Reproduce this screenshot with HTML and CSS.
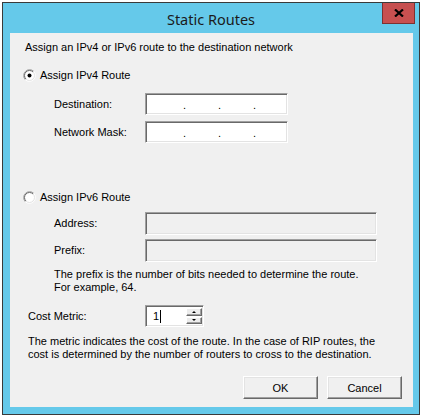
FILE: index.html
```html
<!DOCTYPE html>
<html>
<head>
<meta charset="utf-8">
<link rel="stylesheet" href="styles.css">
</head>
<body>
<div class="window">
  <div class="titlebar">
    <span class="spacer"></span>
    <span class="title">Static Routes</span>
    <span class="close-wrap">
      <span class="close">
        <svg width="10" height="8" viewBox="0 0 10 8"><path d="M1 0.5 L9 7.5 M9 0.5 L1 7.5" stroke="#000" stroke-width="2.2" fill="none"/></svg>
      </span>
    </span>
  </div>
  <div class="client">
    <div class="intro">Assign an IPv4 or IPv6 route to the destination network</div>

    <div class="radio-row r4">
      <svg class="radio" width="13" height="13" viewBox="0 0 13 13">
        <circle cx="6.5" cy="6.5" r="5.5" fill="#fff"/>
        <path d="M2.26 10.74 A6 6 0 0 1 10.74 2.26" stroke="#a0a0a0" fill="none"/>
        <path d="M10.74 2.26 A6 6 0 0 1 2.26 10.74" stroke="#fff" fill="none"/>
        <path d="M2.96 10.04 A5 5 0 0 1 10.04 2.96" stroke="#696969" fill="none"/>
        <path d="M10.04 2.96 A5 5 0 0 1 2.96 10.04" stroke="#e3e3e3" fill="none"/>
        <circle cx="6.5" cy="6.5" r="2" fill="#000"/>
      </svg>
      <span>Assign IPv4 Route</span>
    </div>
    <div class="field-row dest">
      <span class="label">Destination:</span>
      <div class="box ip"><span>.</span><span>.</span><span>.</span></div>
    </div>
    <div class="field-row mask">
      <span class="label">Network Mask:</span>
      <div class="box ip"><span>.</span><span>.</span><span>.</span></div>
    </div>

    <div class="radio-row r6">
      <svg class="radio" width="13" height="13" viewBox="0 0 13 13">
        <circle cx="6.5" cy="6.5" r="5.5" fill="#fff"/>
        <path d="M2.26 10.74 A6 6 0 0 1 10.74 2.26" stroke="#a0a0a0" fill="none"/>
        <path d="M10.74 2.26 A6 6 0 0 1 2.26 10.74" stroke="#fff" fill="none"/>
        <path d="M2.96 10.04 A5 5 0 0 1 10.04 2.96" stroke="#696969" fill="none"/>
        <path d="M10.04 2.96 A5 5 0 0 1 2.96 10.04" stroke="#e3e3e3" fill="none"/>
      </svg>
      <span>Assign IPv6 Route</span>
    </div>
    <div class="field-row addr">
      <span class="label">Address:</span>
      <div class="box wide disabled"></div>
    </div>
    <div class="field-row prefix">
      <span class="label">Prefix:</span>
      <div class="box wide disabled"></div>
    </div>
    <div class="note prefix-note">The prefix is the number of bits needed to determine the route.<br>For example, 64.</div>

    <div class="field-row cost">
      <span class="label">Cost Metric:</span>
      <div class="box spin">
        <span class="val">1</span><span class="caret"></span>
        <span class="spin-btns">
          <span class="sbtn"><span class="up"></span></span>
          <span class="sbtn"><span class="down"></span></span>
        </span>
      </div>
    </div>
    <div class="note metric-note">The metric indicates the cost of the route. In the case of RIP routes, the<br>cost is determined by the number of routers to cross to the destination.</div>

    <div class="buttons">
      <span class="btn">OK</span>
      <span class="btn">Cancel</span>
    </div>
  </div>
</div>
</body>
</html>
```
FILE: styles.css
```css
html, body {
  margin: 0;
  padding: 0;
  background: #ffffff;
}
body {
  width: 422px;
  height: 416px;
  overflow: hidden;
  font-family: "Liberation Sans", Arial, sans-serif;
  font-size: 11px;
  color: #000;
}
.window {
  margin: 2px 0 0 2px;
  width: 418px;
  height: 413px;
  box-sizing: border-box;
  border: 1px solid #3a3a3a;
  background: #65c9ea;
  display: flex;
  flex-direction: column;
}
.titlebar {
  height: 30px;
  display: grid;
  grid-template-columns: 1fr auto 1fr;
  align-items: start;
}
.title {
  font-family: "Noto Sans", "Open Sans", sans-serif;
  font-size: 14.5px;
  color: #1b1b1b;
  line-height: 30px;
  padding-top: 1px;
}
.close-wrap {
  display: flex;
  justify-content: flex-end;
  padding-right: 4px;
}
.close {
  width: 33px;
  height: 21px;
  box-sizing: border-box;
  background: #c75050;
  border: 1px solid #7d3131;
  border-top: none;
  display: flex;
  align-items: center;
  justify-content: center;
  padding-left: 1px;
}
.client {
  margin: 0 6px 7px 7px;
  height: 374px;
  background: #f0f0f0;
  display: flex;
  flex-direction: column;
  padding-left: 15px;
  padding-right: 11px;
  box-sizing: border-box;
  line-height: 13px;
}
.intro {
  margin-top: 8px;
  height: 13px;
}
.radio-row {
  display: flex;
  align-items: center;
  height: 13px;
  margin-left: -2px;
  gap: 4px;
}
.radio { flex: none; }
.r4 { margin-top: 15px; }
.r6 { margin-top: 48px; }
.field-row {
  display: flex;
  align-items: center;
  padding-left: 29px;
}
.field-row .label {
  width: 91px;
  flex: none;
}
.dest { margin-top: 11px; }
.mask { margin-top: 6px; }
.addr { margin-top: 8px; }
.prefix { margin-top: 4px; }
.box {
  height: 22px;
  box-sizing: border-box;
  background: #fff;
  border: 1px solid;
  border-color: #a0a0a0 #ffffff #ffffff #a0a0a0;
  box-shadow: inset 1px 1px 0 #696969, inset -1px -1px 0 #e3e3e3;
}
.ip {
  width: 143px;
  display: grid;
  grid-template-columns: 35px 35px 35px;
  padding-left: 37px;
  padding-top: 2px;
  align-items: center;
}
.wide {
  width: 232px;
  height: 23px;
}
.disabled { background: #f0f0f0; }
.prefix-note {
  margin-top: 6px;
  padding-left: 29px;
}
.note { line-height: 13px; }
.cost {
  margin-top: 11px;
  padding-left: 3px;
}
.cost .label { width: 117px; }
.spin {
  width: 59px;
  display: flex;
  align-items: center;
  padding: 2px 1px 2px 7px;
}
.val { line-height: 13px; }
.caret {
  width: 1px;
  height: 13px;
  background: #000;
  margin-left: 1px;
}
.spin-btns {
  margin-left: auto;
  display: flex;
  flex-direction: column;
  gap: 1px;
  align-self: stretch;
}
.sbtn {
  width: 16px;
  flex: 1;
  box-sizing: border-box;
  background: #ececec;
  border: 1px solid;
  border-color: #ffffff #696969 #696969 #ffffff;
  box-shadow: inset -1px -1px 0 #a0a0a0;
  display: flex;
  align-items: center;
  justify-content: center;
}
.up {
  width: 0; height: 0;
  border-left: 2px solid transparent;
  border-right: 2px solid transparent;
  border-bottom: 2px solid #000;
}
.down {
  width: 0; height: 0;
  border-left: 2px solid transparent;
  border-right: 2px solid transparent;
  border-top: 2px solid #000;
}
.metric-note {
  margin-top: 8px;
  padding-left: 3px;
  line-height: 12.5px;
}
.buttons {
  margin-top: auto;
  margin-bottom: 8px;
  display: flex;
  justify-content: flex-end;
  gap: 9px;
}
.btn {
  width: 75px;
  height: 23px;
  box-sizing: border-box;
  background: #f0f0f0;
  border: 1px solid;
  border-color: #ffffff #696969 #696969 #ffffff;
  box-shadow: inset -1px -1px 0 #a0a0a0, inset 1px 1px 0 #e3e3e3;
  display: flex;
  align-items: center;
  justify-content: center;
  padding-top: 1px;
}
```
